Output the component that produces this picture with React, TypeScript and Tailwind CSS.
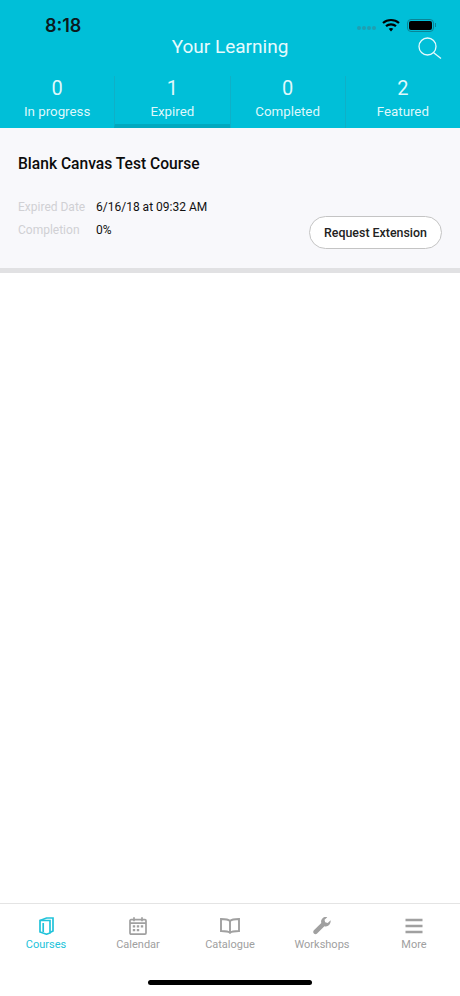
import { ReactNode } from "react";

const tabs = [
  { count: "0", label: "In progress" },
  { count: "1", label: "Expired", active: true },
  { count: "0", label: "Completed" },
  { count: "2", label: "Featured" },
];

function CoursesIcon() {
  return (
    <svg width="15" height="18" viewBox="0 0 15 18" fill="none" stroke="currentColor" strokeWidth="1.700">
      <path d="M1 3.500 7.500 1H14v13l-3 1.500" />
      <path d="M1 3.500V15l6.500 2.200L11 16V3.500H1Z" />
      <path d="M4.200 6v9" />
    </svg>
  );
}

function CalendarIcon() {
  return (
    <svg width="18" height="18" viewBox="0 0 18 18" fill="none" stroke="currentColor" strokeWidth="1.700">
      <rect x="1" y="2.700" width="16" height="14.400" rx="1" />
      <path d="M5 .3v4M13 .3v4M1 6.200h16" />
      <path d="M3.800 8.300h2.400v2.200H3.800zM7.800 8.300h2.400v2.200H7.800zM11.800 8.300h2.400v2.200h-2.400zM3.800 12h2.400v2.200H3.800zM7.800 12h2.400v2.200H7.800z" fill="currentColor" stroke="none" />
    </svg>
  );
}

function BookIcon() {
  return (
    <svg width="20" height="16" viewBox="0 0 20 16" fill="none" stroke="currentColor" strokeWidth="1.900">
      <path d="M10 3C8.500 1.500 6 1 1 1v12c5 0 7.500.300 9 1.800 1.500-1.500 4-1.800 9-1.800V1c-5 0-7.500.500-9 2Z" />
      <path d="M10 3v11.800" />
    </svg>
  );
}

function WrenchIcon() {
  return (
    <svg width="18" height="18" viewBox="0 0 18 18" fill="currentColor">
      <path d="M17.600 3.300 14.700 6l-2.500-.7-.7-2.500L14.300.3c-1.700-.6-3.600-.2-4.900 1.100-1.300 1.300-1.600 3.100-1.100 4.700L.9 13.300c-.9.900-.9 2.300 0 3.200s2.300.9 3.200 0l7.300-7.300c1.600.5 3.400.2 4.700-1.100 1.300-1.300 1.700-3.100 1.500-4.800Z" />
    </svg>
  );
}

function MenuIcon() {
  return (
    <svg width="18" height="16" viewBox="0 0 18 16" fill="none" stroke="currentColor" strokeWidth="2.600">
      <path d="M.5 2h17M.5 8h17M.5 14h17" />
    </svg>
  );
}

function NavItem({ icon, label, active }: { icon: ReactNode; label: string; active?: boolean }) {
  return (
    <div className={`flex flex-1 flex-col items-center ${active ? "text-[#22c3da]" : "text-[#a0a0a0]"}`}>
      <div className="flex h-[20px] items-center justify-center">{icon}</div>
      <span className="mt-[2px] text-[11px] leading-[14px]">{label}</span>
    </div>
  );
}

export default function App() {
  return (
    <div className="flex h-[996px] w-[460px] flex-col overflow-hidden bg-white font-['Roboto',sans-serif]">
      <header className="h-[128px] shrink-0 bg-[#00bfd8]">
        <div className="relative h-[76px]">
          <span className="absolute left-[45px] top-[14px] font-['Inter',sans-serif] text-[18px] font-semibold leading-[24px] text-[#0b1a1e]">
            8:18
          </span>
          <div className="absolute right-[24px] top-[18px] flex items-center">
            <div className="mr-[6px] mt-[6px] flex gap-[1px]">
              <span className="h-[4px] w-[4px] rounded-full bg-[#1f9fb2]" />
              <span className="h-[4px] w-[4px] rounded-full bg-[#1f9fb2]" />
              <span className="h-[4px] w-[4px] rounded-full bg-[#1f9fb2]" />
              <span className="h-[4px] w-[4px] rounded-full bg-[#1f9fb2]" />
            </div>
            <svg width="18" height="14" viewBox="0 0 18 14" fill="none" stroke="black" strokeWidth="2.200">
              <path d="M1 5c4.500-4 11.500-4 16 0" />
              <path d="M4 8.200c2.800-2.400 7.200-2.400 10 0" />
              <path d="M9 13.500 6.700 10.800c1.300-1 3.300-1 4.600 0L9 13.500Z" fill="black" stroke="none" />
            </svg>
            <div className="ml-[7px] flex h-[13px] w-[27px] items-center justify-center rounded-[4px] border border-[#0a8496]">
              <div className="h-[9px] w-[23px] rounded-[2px] bg-black" />
            </div>
            <div className="ml-[1px] h-[4px] w-[1px] bg-[#0a8496]" />
          </div>
          <h1 className="absolute inset-x-0 top-[34px] text-center text-[19px] font-normal leading-[26px] text-[#e6fafd]">
            Your Learning
          </h1>
          <svg className="absolute left-[418px] top-[37px]" width="24" height="24" viewBox="0 0 24 24" fill="none" stroke="#e6fafd" strokeWidth="1.300">
            <circle cx="9.500" cy="9.500" r="8.500" />
            <path d="M15.700 15.700 23 21.500" />
          </svg>
        </div>
        <div className="flex h-[52px]">
          {tabs.map((t, i) => (
            <div
              key={t.label}
              className={`flex flex-1 flex-col items-center text-[#dff8fb] ${
                i > 0 ? "border-l border-[#0fb0c7]" : ""
              } ${t.active ? "border-b-[4px] border-b-[#01a9bf]" : ""}`}
            >
              <span className="text-[20px] leading-[24px]">{t.count}</span>
              <span className="mt-[3px] text-[13.300px] leading-[18px]">{t.label}</span>
            </div>
          ))}
        </div>
      </header>

      <section className="relative h-[145px] shrink-0 border-b-[5px] border-[#e1e1e3] bg-[#f8f8fb] pl-[18px]">
        <h2 className="pt-[26px] text-[15.600px] font-medium leading-[20px] text-[#0c0c0c]">Blank Canvas Test Course</h2>
        <dl className="mt-[25px] grid grid-cols-[78px_auto] gap-y-[6px] text-[12px] leading-[17px]">
          <dt className="text-[#d0d0d4]">Expired Date</dt>
          <dd className="text-[#111]">6/16/18 at 09:32 AM</dd>
          <dt className="text-[#d0d0d4]">Completion</dt>
          <dd className="text-[#111]">0%</dd>
        </dl>
        <button className="absolute right-[18px] top-[88px] h-[33px] w-[133px] rounded-full border border-[#c4c4c4] bg-white pt-[1px] text-[12.400px] font-medium text-[#222]">
          Request Extension
        </button>
      </section>

      <main className="flex-1" />

      <footer className="h-[93px] shrink-0 border-t border-[#e4e4e4] bg-white">
        <div className="flex pt-[12px]">
          <NavItem icon={<CoursesIcon />} label="Courses" active />
          <NavItem icon={<CalendarIcon />} label="Calendar" />
          <NavItem icon={<BookIcon />} label="Catalogue" />
          <NavItem icon={<WrenchIcon />} label="Workshops" />
          <NavItem icon={<MenuIcon />} label="More" />
        </div>
        <div className="mx-auto mt-[28px] h-[5px] w-[164px] rounded-full bg-black" />
      </footer>
    </div>
  );
}
